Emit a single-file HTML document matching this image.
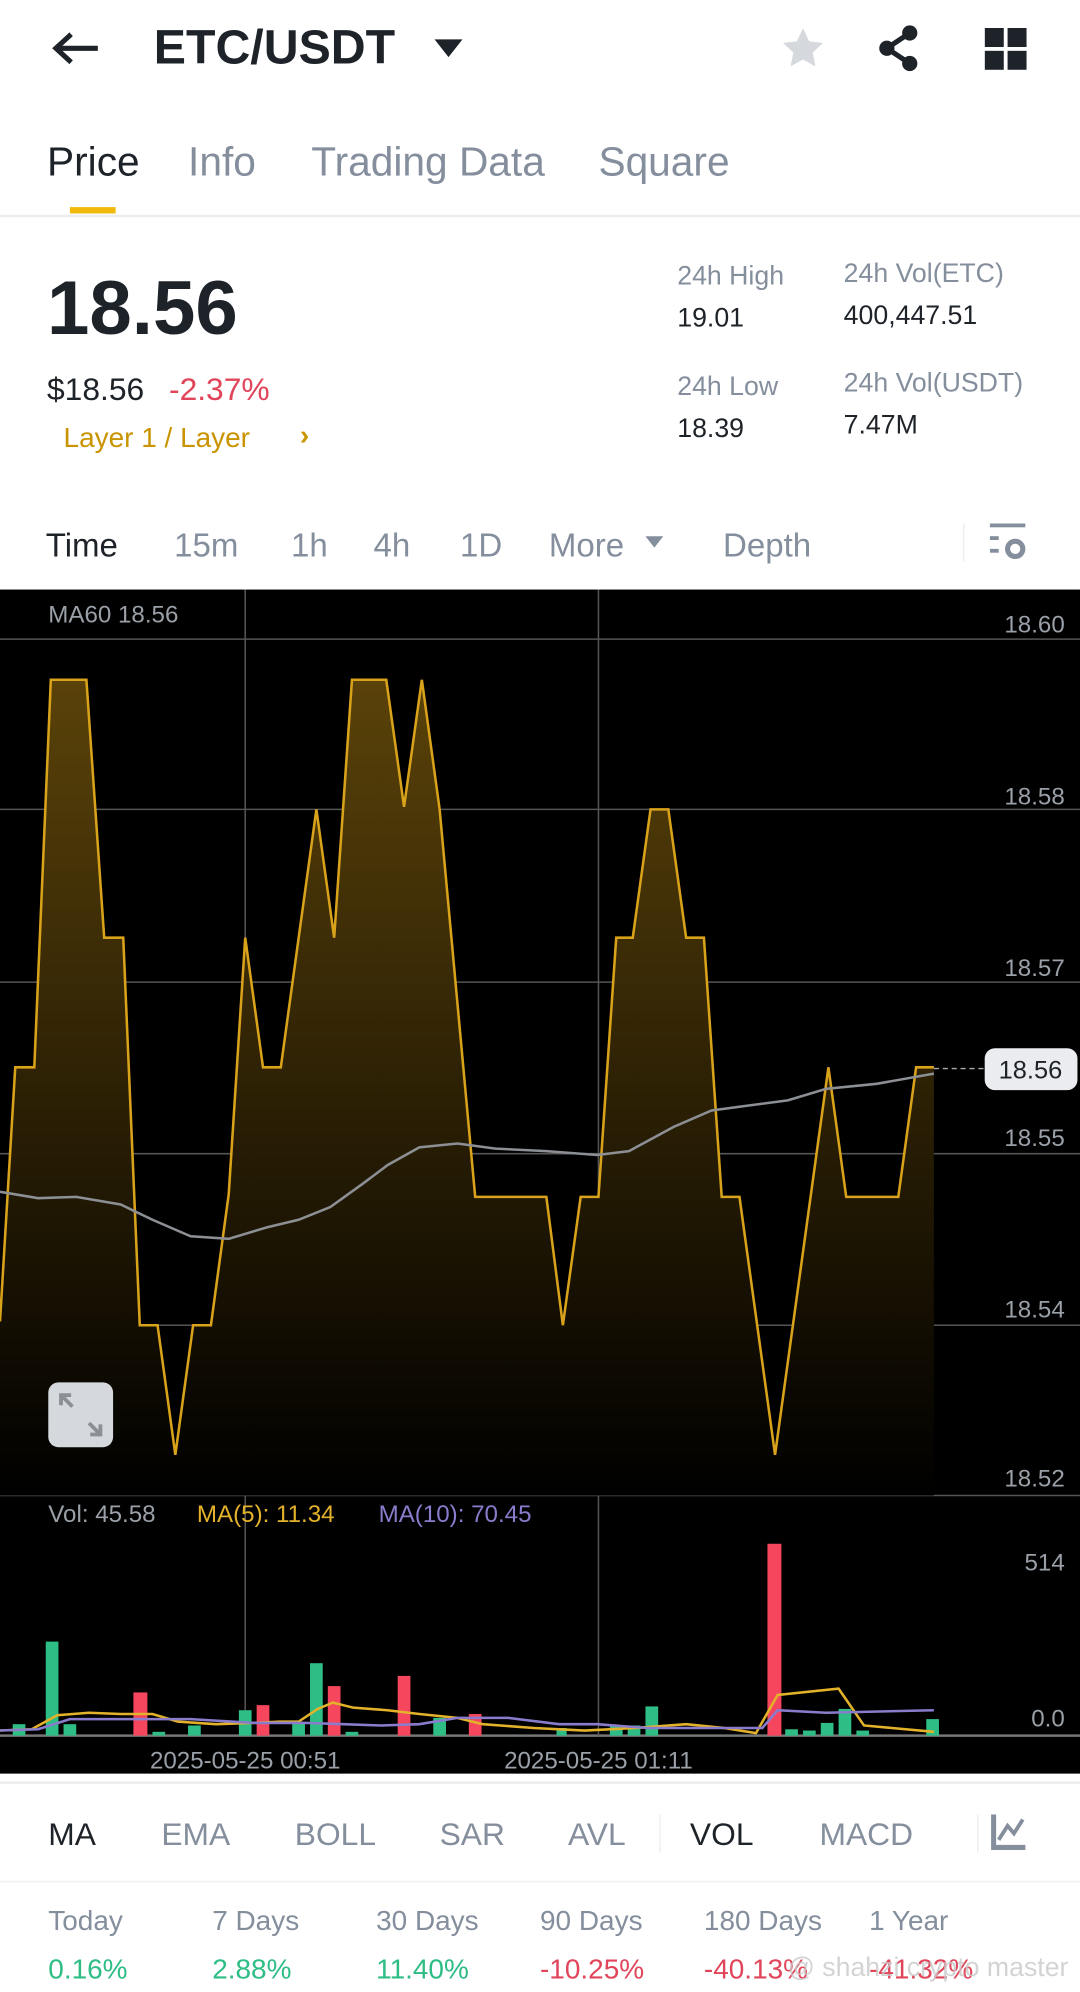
<!DOCTYPE html>
<html><head><meta charset="utf-8"><style>
*{margin:0;padding:0;box-sizing:border-box}
html,body{width:1080px;height:1992px;overflow:hidden;background:#fff}
#w{position:absolute;left:0;top:0;width:850px;height:1568px;transform:scale(1.270588);transform-origin:0 0;font-family:"Liberation Sans",sans-serif;color:#1e2329}
.a{position:absolute;white-space:nowrap;line-height:1}
.g{color:#848e9c}
</style></head><body><div id="w">
<!-- header -->
<svg class="a" style="left:40px;top:24px" width="40" height="28" viewBox="0 0 40 28"><path d="M37 14H5M16 3L4 14l12 11" stroke="#1e2329" stroke-width="4" fill="none"/></svg>
<div class="a" style="left:121px;top:19px;font-size:38px;font-weight:bold">ETC/USDT</div>
<svg class="a" style="left:341px;top:30px" width="24" height="16"><path d="M1 1h22L12 15z" fill="#1e2329"/></svg>
<svg class="a" style="left:613px;top:20px" width="38" height="36" viewBox="0 0 24 24"><path d="M12 1.5l3.2 6.8 7.3.9-5.4 5 1.4 7.3L12 17.9l-6.5 3.6 1.4-7.3-5.4-5 7.3-.9z" fill="#d5d8dc"/></svg>
<svg class="a" style="left:689px;top:18px" width="38" height="40" viewBox="0 0 38 40"><circle cx="27" cy="8" r="6" fill="#1e2329"/><circle cx="9" cy="20" r="6" fill="#1e2329"/><circle cx="27" cy="32" r="6" fill="#1e2329"/><path d="M27 8L9 20l18 12" stroke="#1e2329" stroke-width="4" fill="none"/></svg>
<svg class="a" style="left:775px;top:22px" width="33" height="33"><rect x="0" y="0" width="15" height="15" fill="#1e2329"/><rect x="18" y="0" width="15" height="15" fill="#1e2329"/><rect x="0" y="18" width="15" height="15" fill="#1e2329"/><rect x="18" y="18" width="15" height="15" fill="#1e2329"/></svg>
<!-- tabs -->
<div class="a" style="left:37px;top:111px;font-size:32px">Price</div>
<div class="a g" style="left:148px;top:111px;font-size:32px">Info</div>
<div class="a g" style="left:245px;top:111px;font-size:32px">Trading Data</div>
<div class="a g" style="left:471px;top:111px;font-size:32px">Square</div>
<div class="a" style="left:55px;top:163px;width:36px;height:5px;background:#f0b90b"></div>
<div class="a" style="left:0;top:169px;width:850px;height:2px;background:#eaecef"></div>
<!-- price -->
<div class="a" style="left:37px;top:213px;font-size:60px;font-weight:bold">18.56</div>
<div class="a" style="left:37px;top:295px;font-size:25px">$18.56</div>
<div class="a" style="left:133px;top:295px;font-size:25px;color:#e0455a">-2.37%</div>
<div class="a" style="left:50px;top:334px;font-size:22px;color:#c99400">Layer 1 / Layer</div>
<div class="a" style="left:236px;top:332px;font-size:22px;color:#c99400;font-weight:bold">›</div>
<div class="a g" style="left:533px;top:207px;font-size:21px">24h High</div>
<div class="a" style="left:533px;top:240px;font-size:21px">19.01</div>
<div class="a g" style="left:533px;top:294px;font-size:21px">24h Low</div>
<div class="a" style="left:533px;top:327px;font-size:21px">18.39</div>
<div class="a g" style="left:664px;top:205px;font-size:21px">24h Vol(ETC)</div>
<div class="a" style="left:664px;top:238px;font-size:21px">400,447.51</div>
<div class="a g" style="left:664px;top:291px;font-size:21px">24h Vol(USDT)</div>
<div class="a" style="left:664px;top:324px;font-size:21px">7.47M</div>
<!-- intervals -->
<div class="a" style="left:36px;top:416px;font-size:26px">Time</div>
<div class="a g" style="left:137px;top:416px;font-size:26px">15m</div>
<div class="a g" style="left:229px;top:416px;font-size:26px">1h</div>
<div class="a g" style="left:294px;top:416px;font-size:26px">4h</div>
<div class="a g" style="left:362px;top:416px;font-size:26px">1D</div>
<div class="a g" style="left:432px;top:416px;font-size:26px">More</div>
<svg class="a" style="left:507px;top:421px" width="16" height="11"><path d="M1 1h14L8 10z" fill="#848e9c"/></svg>
<div class="a g" style="left:569px;top:416px;font-size:26px">Depth</div>
<div class="a" style="left:758px;top:412px;width:1px;height:30px;background:#eaecef"></div>
<svg class="a" style="left:779px;top:412px" width="30" height="30"><rect x="0" y="0" width="28" height="3" fill="#848e9c"/><rect x="0" y="10" width="7" height="3" fill="#848e9c"/><rect x="0" y="20" width="7" height="3" fill="#848e9c"/><circle cx="20" cy="20" r="6" fill="none" stroke="#848e9c" stroke-width="4"/></svg>
<!-- chart -->
<svg class="a" style="left:0;top:464px" width="850" height="932" viewBox="0 464 850 932">
<defs><linearGradient id="gf" x1="0" y1="535" x2="0" y2="1177" gradientUnits="userSpaceOnUse"><stop offset="0" stop-color="#5a4209"/><stop offset="1" stop-color="#000"/></linearGradient></defs>
<rect x="0" y="464" width="850" height="932" fill="#000"/>
<g stroke="#555" stroke-width="1.2">
<line x1="0" y1="503" x2="850" y2="503"/><line x1="0" y1="637" x2="850" y2="637"/><line x1="0" y1="773" x2="850" y2="773"/><line x1="0" y1="908" x2="850" y2="908"/><line x1="0" y1="1043" x2="850" y2="1043"/><line x1="0" y1="1177" x2="850" y2="1177"/><line x1="0" y1="1366" x2="850" y2="1366" stroke="#777" stroke-width="2"/>
<line x1="193" y1="464" x2="193" y2="1366"/><line x1="471" y1="464" x2="471" y2="1366"/></g>
<path d="M0 1040L12 840L27 840L40 535L68 535L82 738L97 738L110 1043L124 1043L138 1145L152 1043L166 1043L180 940L193 738L207 840L221 840L249 637L263 738L277 535L304 535L318 635L332 535L346 637L374 942L430 942L443 1043L457 942L471 942L485 738L498 738L512 637L526 637L540 738L554 738L568 942L582 942L610 1145L652 840L666 942L707 942L721 840L735 840L735 1177L0 1177Z" fill="url(#gf)"/>
<path d="M0 1040L12 840L27 840L40 535L68 535L82 738L97 738L110 1043L124 1043L138 1145L152 1043L166 1043L180 940L193 738L207 840L221 840L249 637L263 738L277 535L304 535L318 635L332 535L346 637L374 942L430 942L443 1043L457 942L471 942L485 738L498 738L512 637L526 637L540 738L554 738L568 942L582 942L610 1145L652 840L666 942L707 942L721 840L735 840" fill="none" stroke="#d9a21b" stroke-width="2"/>
<path d="M0 938L30 943L60 942L95 948L120 960L150 973L180 975L210 966L235 960L260 950L285 932L305 917L330 903L360 900L390 904L430 906L470 909L495 906L530 887L560 874L590 870L620 866L650 857L690 853L735 845" fill="none" stroke="#8c8f94" stroke-width="2"/>
<line x1="735" y1="841" x2="775" y2="841" stroke="#aaa" stroke-dasharray="4 3"/>
<rect x="775" y="825" width="73" height="33" rx="8" fill="#eaecef"/>
<text x="811" y="849" text-anchor="middle" font-size="20" fill="#1e2329" font-family="Liberation Sans">18.56</text>
<g font-family="Liberation Sans" font-size="19" fill="#9aa0a8" text-anchor="end">
<text x="838" y="498">18.60</text><text x="838" y="633">18.58</text><text x="838" y="768">18.57</text><text x="838" y="902">18.55</text><text x="838" y="1037">18.54</text><text x="838" y="1170">18.52</text>
<text x="838" y="1236">514</text><text x="838" y="1359">0.0</text></g>
<g font-family="Liberation Sans" font-size="19">
<text x="38" y="490" fill="#9aa0a8">MA60 18.56</text>
<text x="38" y="1198" fill="#9aa0a8">Vol: 45.58</text>
<text x="155" y="1198" fill="#e3b22a">MA(5): 11.34</text>
<text x="298" y="1198" fill="#8a7ccc">MA(10): 70.45</text>
<text x="193" y="1392" fill="#9aa0a8" text-anchor="middle">2025-05-25 00:51</text>
<text x="471" y="1392" fill="#9aa0a8" text-anchor="middle">2025-05-25 01:11</text></g>
<rect x="38" y="1088" width="51" height="51" rx="8" fill="#d5d8dc"/>
<path d="M48 1098l8 0-8 0 0 8M48 1098l9 9M79 1129l-8 0 8 0 0-8M79 1129l-9-9" stroke="#8c8f94" stroke-width="3" fill="none"/>
<g fill="#2ebd85">
<rect x="10" y="1357" width="10" height="9"/><rect x="36" y="1292" width="10" height="74"/><rect x="50" y="1357" width="10" height="9"/><rect x="120" y="1363" width="10" height="3"/><rect x="148" y="1358" width="10" height="8"/><rect x="188" y="1346" width="10" height="20"/><rect x="230" y="1356" width="10" height="10"/><rect x="244" y="1309" width="10" height="57"/><rect x="272" y="1363" width="10" height="3"/><rect x="341" y="1352" width="10" height="14"/><rect x="438" y="1360" width="8" height="6"/><rect x="480" y="1358" width="10" height="8"/><rect x="494" y="1358" width="10" height="8"/><rect x="508" y="1343" width="10" height="23"/><rect x="618" y="1361" width="10" height="5"/><rect x="632" y="1362" width="10" height="4"/><rect x="646" y="1356" width="10" height="10"/><rect x="660" y="1345" width="10" height="21"/><rect x="674" y="1362" width="10" height="4"/><rect x="729" y="1353" width="10" height="13"/></g>
<g fill="#f6465d"><rect x="105" y="1332" width="11" height="34"/><rect x="202" y="1342" width="10" height="24"/><rect x="258" y="1327" width="10" height="39"/><rect x="313" y="1319" width="10" height="47"/><rect x="369" y="1349" width="10" height="17"/><rect x="604" y="1215" width="11" height="151"/></g>
<path d="M0 1362L25 1361L45 1350L70 1348L95 1349L120 1349L140 1355L170 1357L200 1356L220 1355L235 1355L250 1345L262 1340L278 1344L305 1346L330 1349L360 1352L380 1357L420 1360L460 1362L500 1360L540 1357L570 1360L595 1364L612 1334L660 1329L680 1358L735 1363" fill="none" stroke="#e3b22a" stroke-width="2"/>
<path d="M0 1362L30 1361L55 1353L100 1353L150 1353L200 1356L240 1356L270 1357L300 1358L330 1357L360 1352L400 1352L440 1357L470 1357L510 1360L560 1360L600 1360L612 1346L650 1348L735 1346" fill="none" stroke="#8a7ccc" stroke-width="2"/>
</svg>
<!-- indicators -->
<div class="a" style="left:0;top:1402px;width:850px;height:2px;background:#eaecef"></div>
<div class="a" style="left:38px;top:1432px;font-size:25px">MA</div>
<div class="a g" style="left:127px;top:1432px;font-size:25px">EMA</div>
<div class="a g" style="left:232px;top:1432px;font-size:25px">BOLL</div>
<div class="a g" style="left:346px;top:1432px;font-size:25px">SAR</div>
<div class="a g" style="left:447px;top:1432px;font-size:25px">AVL</div>
<div class="a" style="left:519px;top:1428px;width:1px;height:30px;background:#eaecef"></div>
<div class="a" style="left:543px;top:1432px;font-size:25px">VOL</div>
<div class="a g" style="left:645px;top:1432px;font-size:25px">MACD</div>
<div class="a" style="left:769px;top:1428px;width:1px;height:30px;background:#eaecef"></div>
<svg class="a" style="left:780px;top:1428px" width="28" height="28"><path d="M2 0V26H27" stroke="#848e9c" stroke-width="4" fill="none"/><path d="M6 20L13 9L18 15L25 4" stroke="#848e9c" stroke-width="3" fill="none"/></svg>
<div class="a" style="left:0;top:1480px;width:850px;height:2px;background:#f5f5f5"></div>
<div class="a g" style="left:38px;top:1501px;font-size:22px">Today</div>
<div class="a g" style="left:167px;top:1501px;font-size:22px">7 Days</div>
<div class="a g" style="left:296px;top:1501px;font-size:22px">30 Days</div>
<div class="a g" style="left:425px;top:1501px;font-size:22px">90 Days</div>
<div class="a g" style="left:554px;top:1501px;font-size:22px">180 Days</div>
<div class="a g" style="left:684px;top:1501px;font-size:22px">1 Year</div>
<div class="a" style="left:38px;top:1539px;font-size:22px;color:#2ebd85">0.16%</div>
<div class="a" style="left:167px;top:1539px;font-size:22px;color:#2ebd85">2.88%</div>
<div class="a" style="left:296px;top:1539px;font-size:22px;color:#2ebd85">11.40%</div>
<div class="a" style="left:425px;top:1539px;font-size:22px;color:#e0455a">-10.25%</div>
<div class="a" style="left:554px;top:1539px;font-size:22px;color:#e0455a">-40.13%</div>
<div class="a" style="left:684px;top:1539px;font-size:22px;color:#e0455a">-41.32%</div>
<div class="a" style="left:620px;top:1538px;font-size:21px;color:rgba(200,200,200,.8)">@ shahzi crypto master</div>
</div></body></html>
